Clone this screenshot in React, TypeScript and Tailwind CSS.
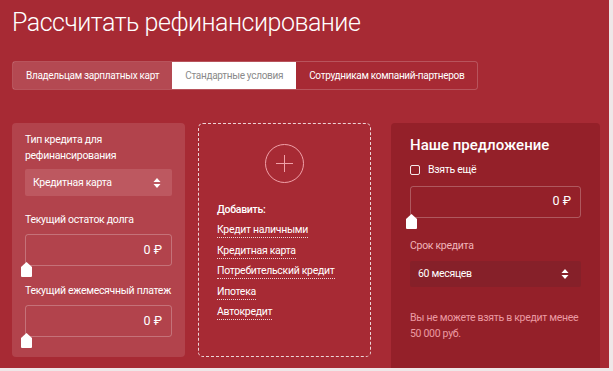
const font = { fontFamily: 'Roboto, "Noto Sans", sans-serif' }

function Thumb() {
  return (
    <svg width="11" height="15" viewBox="0 0 11 15" className="absolute -bottom-[12px] -left-[5px]">
      <path d="M5.5 0 L11 5 L11 14 Q11 15 10 15 L1 15 Q0 15 0 14 L0 5 Z" fill="#fff" />
    </svg>
  )
}

function AmountInput({ className = '' }: { className?: string }) {
  return (
    <div className={`relative h-[32px] rounded-[3px] border border-white/25 flex items-center justify-end pr-[9px] text-[12.5px] tracking-normal text-white ${className}`}>
      0 ₽
      <Thumb />
    </div>
  )
}

function Arrows() {
  return (
    <svg width="8" height="12" viewBox="0 0 8 12">
      <path d="M4 1 L7.5 5 L0.5 5 Z" fill="#fff" />
      <path d="M4 11 L7.5 7 L0.5 7 Z" fill="#fff" />
    </svg>
  )
}

const links = ['Кредит наличными', 'Кредитная карта', 'Потребительский кредит', 'Ипотека', 'Автокредит']

export default function App() {
  return (
    <div style={font} className="w-[613px] h-[371px] overflow-hidden bg-[#a72a34] border-r-[4px] border-b-[3px] border-[#efe7e8] text-white">
      <div className="pl-[12px] pt-[5px]">
        <h1 className="text-[25px] font-light leading-[36px] tracking-[-0.5px] text-white">Рассчитать рефинансирование</h1>

        <div className="mt-[20px] flex w-fit border border-white/20 rounded-[3px] text-[10px] tracking-[-0.3px] h-[29px]">
          <div className="flex items-center px-[13px] bg-white/15">Владельцам зарплатных карт</div>
          <div className="flex items-center px-[13px] bg-white text-[#8a8a8a]">Стандартные условия</div>
          <div className="flex items-center px-[13px]">Сотрудникам компаний-партнеров</div>
        </div>

        <div className="mt-[33px] flex items-start text-[10.5px] tracking-[-0.3px]">
          <div className="w-[173px] h-[234px] rounded-[4px] bg-[#b2434c] px-[13px] pt-[9px]">
            <div className="leading-[16px]">Тип кредита для<br />рефинансирования</div>
            <div className="mt-[5px] h-[27px] rounded-[2px] bg-[#bd5860] flex items-center justify-between pl-[8px] pr-[11px]">
              <span>Кредитная карта</span>
              <Arrows />
            </div>
            <div className="mt-[16px] leading-[16px]">Текущий остаток долга</div>
            <AmountInput className="mt-[6px]" />
            <div className="mt-[17px] leading-[16px] whitespace-nowrap">Текущий ежемесячный платеж</div>
            <AmountInput className="mt-[6px]" />
          </div>

          <div className="ml-[13px] w-[173px] h-[234px] rounded-[5px] border border-dashed border-white/80 pl-[18px] pt-[20px]">
            <div className="ml-[48px] w-[39px] h-[39px] rounded-full border border-[#f0a0a8] flex items-center justify-center">
              <svg width="17" height="17" viewBox="0 0 17 17">
                <path d="M8.5 0 V17 M0 8.5 H17" stroke="#f0a0a8" strokeWidth="1" />
              </svg>
            </div>
            <div className="mt-[19px] font-medium leading-[16px]">Добавить:</div>
            <div className="mt-[4px] flex flex-col items-start gap-[4.5px]">
              {links.map(l => (
                <span key={l} className="leading-[15px] border-b border-dotted border-white/80">{l}</span>
              ))}
            </div>
          </div>

          <div className="ml-[20px] w-[209px] h-[260px] rounded-t-[4px] bg-[#942029] pl-[19px] pr-[19px] pt-[12px]">
            <div className="text-[15px] font-medium leading-[20px] tracking-normal">Наше предложение</div>
            <label className="mt-[7px] flex items-center gap-[8px]">
              <span className="w-[10px] h-[10px] rounded-[2px] border border-white/90" />
              <span>Взять ещё</span>
            </label>
            <AmountInput className="mt-[8px]" />
            <div className="mt-[20px] leading-[16px] text-[#f0b4b9]">Срок кредита</div>
            <div className="mt-[7px] h-[26px] rounded-[2px] bg-[#862029] flex items-center justify-between pl-[8px] pr-[12px]">
              <span>60 месяцев</span>
              <Arrows />
            </div>
            <div className="mt-[23px] leading-[16px] text-[#eb9aa2]">Вы не можете взять в кредит менее<br />50 000 руб.</div>
          </div>
        </div>
      </div>
    </div>
  )
}
